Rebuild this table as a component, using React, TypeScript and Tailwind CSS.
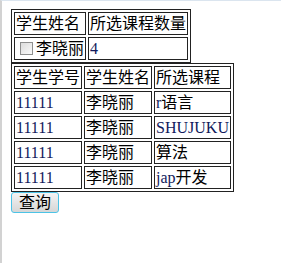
import React from 'react';

const students = [
  { id: '11111', name: '李晓丽', course: 'r', courseRest: '语言' },
  { id: '11111', name: '李晓丽', course: 'SHUJUKU', courseRest: '' },
  { id: '11111', name: '李晓丽', course: '', courseRest: '算法' },
  { id: '11111', name: '李晓丽', course: 'jap', courseRest: '开发' },
];

const cell = 'border border-[#222] p-[1px] leading-[19px] text-left align-middle whitespace-nowrap font-normal';
const latin = 'text-[#111a5c]';

export default function App() {
  return (
    <div
      className="min-h-[263px] border-t border-t-[#dbe5ef] border-l-2 border-l-[#d2d2d2] bg-white text-black text-[16px]"
      style={{ fontFamily: '"Liberation Serif", "Noto Sans CJK SC", serif' }}
    >
      <div className="pl-[9px] pt-[8px]">
        {/* summary table */}
        <table className="border-separate border-spacing-[2px] border border-[#222]">
          <tbody>
            <tr>
              <th className={cell}>学生姓名</th>
              <th className={cell}>所选课程数量</th>
            </tr>
            <tr>
              <td className={cell}>
                <div className="flex items-center">
                  <span className="ml-[4px] mr-[3px] w-[13px] h-[13px] border border-[#8e8f8f] bg-gradient-to-br from-[#dcdcdc] to-[#fafafa]"></span>
                  <span>李晓丽</span>
                </div>
              </td>
              <td className={cell}>
                <span className={latin}>4</span>
              </td>
            </tr>
          </tbody>
        </table>

        {/* course table */}
        <table className="border-separate border-spacing-[2px] border border-[#222]">
          <tbody>
            <tr>
              <th className={cell}>学生学号</th>
              <th className={cell}>学生姓名</th>
              <th className={cell}>所选课程</th>
            </tr>
            {students.map((s, i) => (
              <tr key={i}>
                <td className={cell}>
                  <span className={latin}>{s.id}</span>
                </td>
                <td className={cell}>{s.name}</td>
                <td className={cell}>
                  <span className={latin}>{s.course}</span>
                  {s.courseRest}
                </td>
              </tr>
            ))}
          </tbody>
        </table>

        <button className="w-[48px] h-[21px] rounded-[3px] border border-[#4cc3e6] bg-gradient-to-b from-[#f4f4f4] to-[#d6d6d6] text-[16px] leading-[19px] text-black flex items-center justify-center">
          查询
        </button>
      </div>
    </div>
  );
}
